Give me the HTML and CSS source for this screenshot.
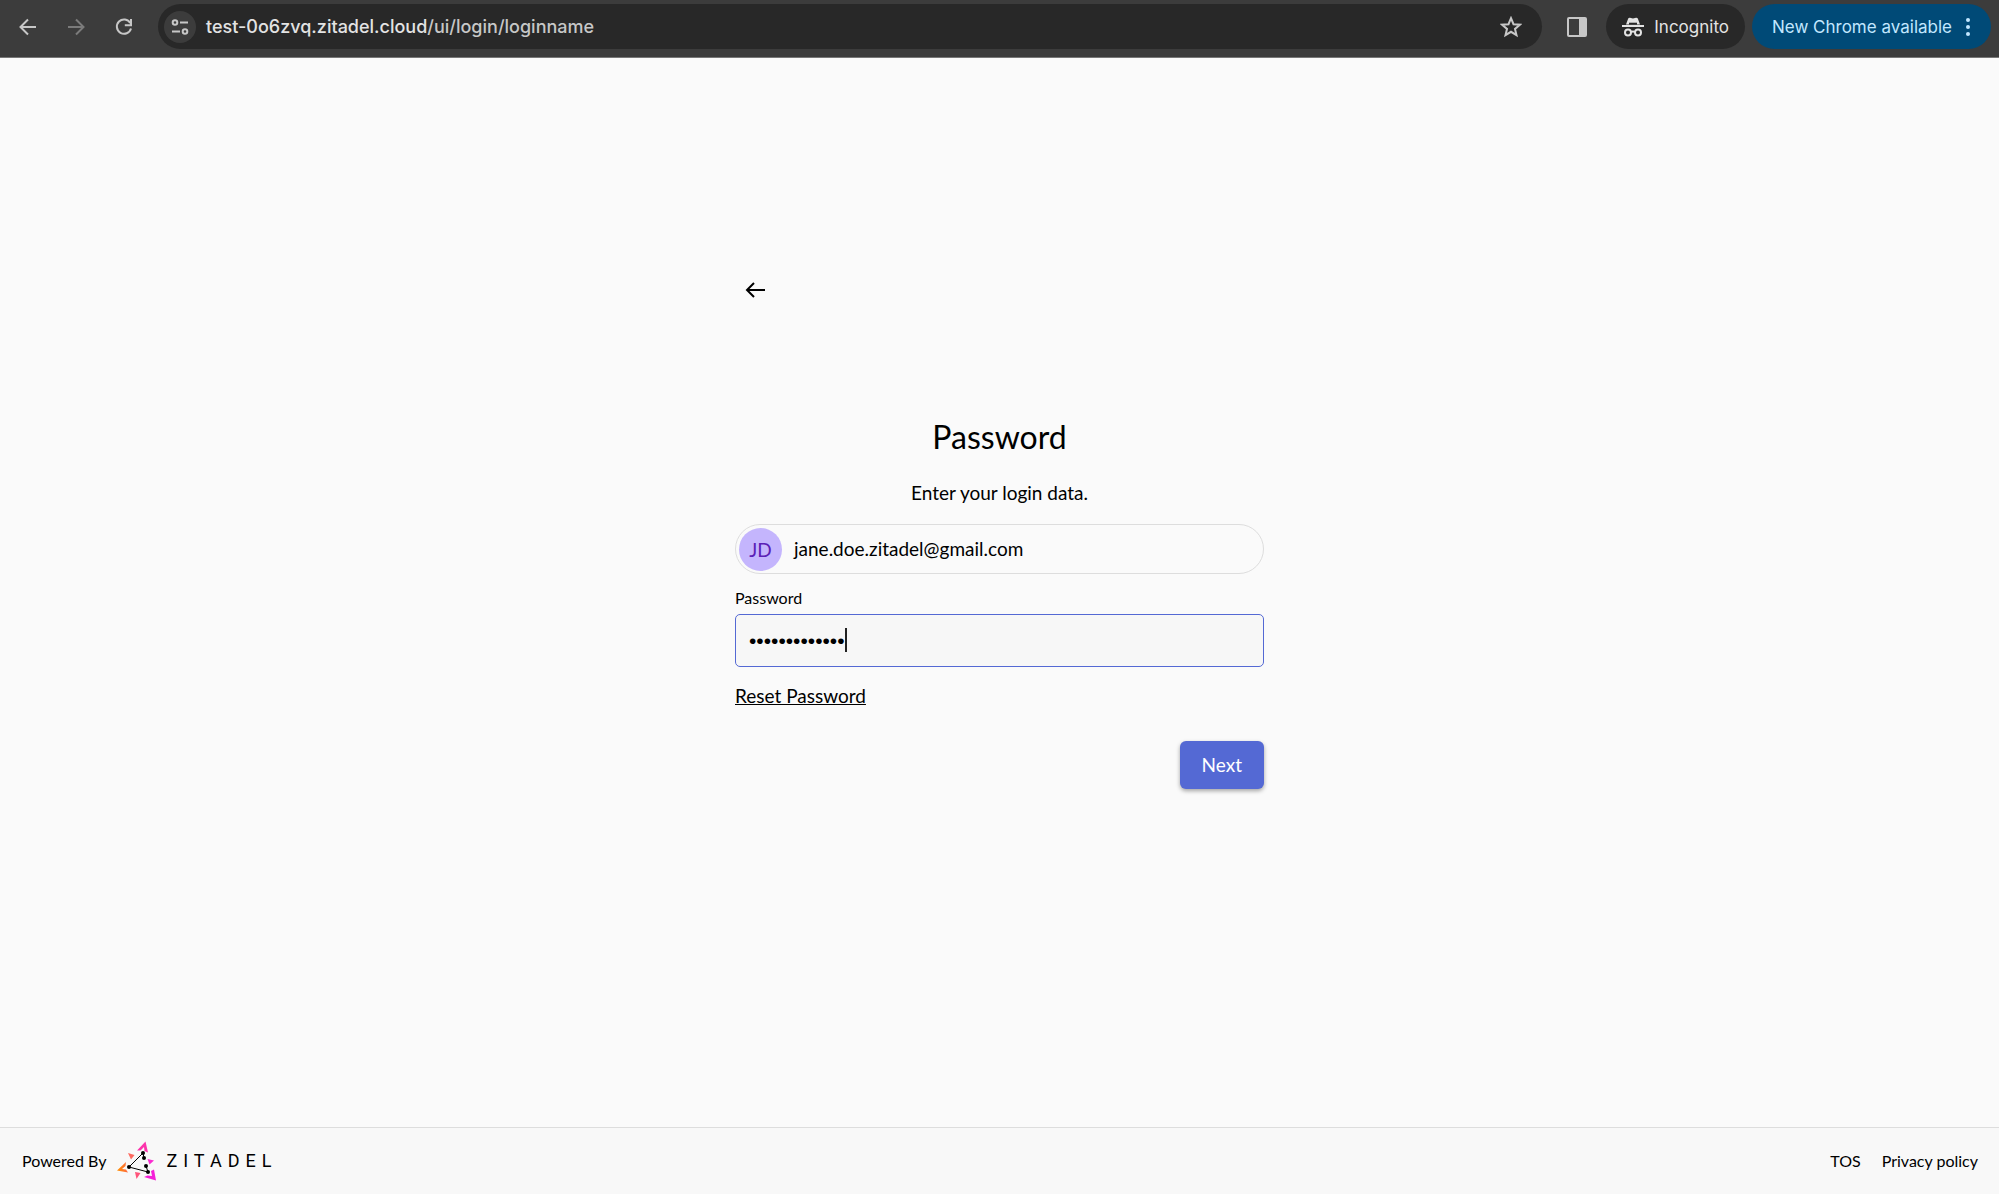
FILE: index.html
```html
<!DOCTYPE html>
<html lang="en">
<head>
    <meta charset="utf-8" />
    <title>Password</title>
    <link rel="stylesheet" href="styles.css">
</head>
<body>
    <header class="browser-bar">
        <button class="nav-btn" type="button" aria-label="Back">
            <svg width="20" height="20" viewBox="0 0 20 20"><path d="M18 10H3M10 2.5L2.5 10l7.5 7.5" /></svg>
        </button>
        <button class="nav-btn nav-off" type="button" aria-label="Forward">
            <svg width="20" height="20" viewBox="0 0 20 20"><path d="M2 10h15M10 2.5l7.5 7.5-7.5 7.5" /></svg>
        </button>
        <button class="nav-btn" type="button" aria-label="Reload">
            <svg width="20" height="20" viewBox="0 0 20 20"><path d="M16.3 6A7.2 7.2 0 1 0 17 11.5M17 2v6.2h-6.2" /></svg>
        </button>
        <div class="address">
            <button class="site-info" type="button" aria-label="View site information">
                <svg width="20" height="20" viewBox="0 0 20 20"><circle cx="5" cy="5.5" r="2.3" /><path d="M10 5.5h8M2 14.5h8" /><circle cx="15" cy="14.5" r="2.3" /></svg>
            </button>
            <span class="url">test-0o6zvq.zitadel.cloud<span class="url-path">/ui/login/loginname</span></span>
            <button class="star" type="button" aria-label="Bookmark this tab">
                <svg width="22" height="22" viewBox="0 0 22 22"><path d="M11 2.2l2.5 6 6.4.5-4.9 4.2 1.5 6.3-5.5-3.4-5.5 3.4 1.5-6.3-4.9-4.2 6.4-.5z" /></svg>
            </button>
        </div>
        <button class="panel-btn" type="button" aria-label="Side panel">
            <svg width="20" height="20" viewBox="0 0 20 20"><rect x="1" y="1" width="18" height="18" rx="1" /><path class="fill" d="M12 1h7v18h-7z" /></svg>
        </button>
        <button class="pill" type="button">
            <svg width="22" height="20" viewBox="0 0 22 20"><path class="fill" d="M0 8h22v2H0zM4 7.5L6.2 1.6Q6.8.4 8 .7l3 .8 3-.8q1.2-.3 1.8.9L18 7.5z" /><path class="hat" d="M7 6.7h8" /><circle cx="6" cy="15.5" r="3" /><circle cx="16" cy="15.5" r="3" /><path d="M9 15q2-1.200 4 0" /></svg>
            Incognito
        </button>
        <button class="pill update" type="button">
            New Chrome available
            <svg width="6" height="20" viewBox="0 0 6 20"><circle cx="3" cy="3" r="2" /><circle cx="3" cy="10" r="2" /><circle cx="3" cy="17" r="2" /></svg>
        </button>
    </header>

    <main class="content">
        <form class="login" action="#" method="post">
            <a class="back" href="#" aria-label="Back">
                <svg width="22" height="22" viewBox="0 0 22 22"><path d="M20 11H2M9 4l-7 7 7 7" /></svg>
            </a>
            <h1>Password</h1>
            <p class="intro">Enter your login data.</p>
            <div class="account">
                <span class="avatar">JD</span>
                <span>jane.doe.zitadel@gmail.com</span>
            </div>
            <label for="password">Password</label>
            <div class="field">
                <input id="password" type="password" value="zitadelsecret" autocomplete="off" />
                <span class="caret"></span>
            </div>
            <a class="reset" href="#">Reset Password</a>
            <div class="actions">
                <button class="next" type="submit">Next</button>
            </div>
        </form>
    </main>

    <footer class="footer">
        <span>Powered By</span>
        <a class="brand" href="#">
            <svg width="40" height="40" viewBox="0 0 40 40">
                <defs>
                    <linearGradient id="warm" x1="0" y1="0" x2="1" y2="0">
                        <stop offset="0" stop-color="#ff9000" />
                        <stop offset="1" stop-color="#ff6b45" />
                    </linearGradient>
                </defs>
                <path fill="#fc34ac" d="M20 9.5L28.5.5l2.500 11-3.500-1.500-.5-4-3.500 3.500z" />
                <path fill="url(#warm)" d="M9 21L0 29.5l11 2-2-3-4-.5 3.500-3z" />
                <path fill="#f51fd8" d="M27 36l12 3.500-2-11-3 1.500 1 5-4.500-.5z" />
                <path fill="#ff6a60" d="M11 12l6.500 2-3.500 4.500z" />
                <path fill="#fb2bd0" d="M30.500 18l6.500 1.500-4.500 4z" />
                <path fill="#ff547a" d="M18 31l5.500 1-4 6z" />
                <path class="edges" d="M26 12L12 26l19 5M26 12l1 5M29 25l2 6" />
                <circle cx="26" cy="12" r="2" /><circle cx="27" cy="17" r="2" /><circle cx="12" cy="26" r="2" /><circle cx="29" cy="25" r="2" /><circle cx="31" cy="31" r="2" />
            </svg>
            <span class="wordmark">ZITADEL</span>
        </a>
        <nav class="links">
            <a href="#">TOS</a>
            <a href="#">Privacy policy</a>
        </nav>
    </footer>
</body>
</html>
```
FILE: styles.css
```css
* {
    box-sizing: border-box;
}

body {
    margin: 0;
    min-height: 100vh;
    display: flex;
    flex-direction: column;
    background: #fafafa;
    color: #000;
    font-family: Lato, sans-serif;
    font-size: 19px;
    line-height: 24px;
}

a {
    color: inherit;
    text-decoration: none;
}

button {
    border: 0;
    padding: 0;
    background: none;
    font: inherit;
    color: inherit;
}

svg {
    display: block;
    flex: none;
}

.fill {
    fill: currentColor;
    stroke: none;
}

/* browser toolbar */
.browser-bar {
    display: flex;
    align-items: center;
    padding: 4px 8px 8px 4px;
    border-bottom: 1px solid #777;
    background: #3c3c3c;
    color: #c7c7c7;
    font-family: Inter, sans-serif;
    font-size: 17px;
}

.browser-bar svg {
    fill: none;
    stroke: currentColor;
    stroke-width: 2;
}

.nav-btn {
    display: flex;
    justify-content: center;
    width: 48px;
}

.nav-off {
    color: #7b7b7b;
}

.address {
    flex: 1;
    display: flex;
    align-items: center;
    gap: 10px;
    height: 45px;
    margin-left: 10px;
    padding: 0 20px 0 6px;
    border-radius: 23px;
    background: #282828;
}

.site-info {
    display: flex;
    align-items: center;
    justify-content: center;
    width: 32px;
    height: 32px;
    border-radius: 50%;
    background: #3c3c3c;
}

.url {
    flex: 1;
    color: #e3e3e3;
    font-size: 18px;
    font-weight: 500;
}

.url-path {
    color: #c7c7c7;
}

.panel-btn {
    margin: 0 19px 0 25px;
}

.pill {
    display: flex;
    align-items: center;
    gap: 10px;
    height: 45px;
    padding: 0 16px;
    border-radius: 23px;
    background: #282828;
    color: #e3e3e3;
}

.hat {
    stroke: #282828;
}

.update {
    gap: 13px;
    margin-left: 7px;
    padding: 0 20px;
    background: #004a77;
    color: #c2e7ff;
}

.update circle {
    fill: currentColor;
    stroke: none;
}

/* login form */
.content {
    flex: 1;
    padding: 209px 16px 40px;
}

.login {
    display: flex;
    flex-direction: column;
    max-width: 529px;
    margin: 0 auto;
}

.back {
    align-self: flex-start;
    padding: 12px 10px;
}

.back svg {
    fill: none;
    stroke: #000;
    stroke-width: 2;
}

h1 {
    margin: 104px 0 0;
    font-size: 32px;
    line-height: 40px;
    font-weight: 400;
    text-align: center;
}

.intro {
    margin: 24px 0 19px;
    text-align: center;
}

.account {
    display: flex;
    align-items: center;
    gap: 12px;
    height: 50px;
    padding: 0 3px;
    border: 1px solid #ddd;
    border-radius: 25px;
}

.avatar {
    width: 43px;
    height: 43px;
    border-radius: 50%;
    background: #c4b5fd;
    color: #5b21b6;
    line-height: 43px;
    text-align: center;
}

label {
    margin: 14px 0 6px;
    font-size: 16px;
    line-height: 20px;
}

.field {
    position: relative;
}

.field input {
    display: block;
    width: 100%;
    height: 53px;
    padding: 0 13px;
    border: 1px solid #5469d4;
    border-radius: 5px;
    outline: 0;
    background: #f7f7f7;
    color: #000;
    font-family: "Liberation Sans", sans-serif;
    font-size: 21px;
}

.caret {
    position: absolute;
    left: 110px;
    top: 14px;
    width: 2px;
    height: 24px;
    background: #222;
}

.reset {
    align-self: flex-start;
    margin: 17px 0 33px;
    text-decoration: underline;
}

.actions {
    display: flex;
    justify-content: flex-end;
}

.next {
    height: 48px;
    padding: 0 22px;
    border-radius: 6px;
    background: #5469d4;
    color: #fff;
    box-shadow: 0 2px 4px rgba(0, 0, 0, .35);
}

/* footer */
.footer {
    display: flex;
    align-items: center;
    gap: 11px;
    height: 67px;
    padding: 0 21px 0 22px;
    border-top: 1px solid #ddd;
    background: #f8f8f8;
    font-size: 16px;
}

.brand {
    display: flex;
    align-items: center;
    gap: 9px;
}

.edges {
    fill: none;
    stroke: #000;
}

.wordmark {
    font-family: Roboto, sans-serif;
    font-size: 18px;
    letter-spacing: 6px;
}

.links {
    display: flex;
    gap: 21px;
    margin-left: auto;
}
```
